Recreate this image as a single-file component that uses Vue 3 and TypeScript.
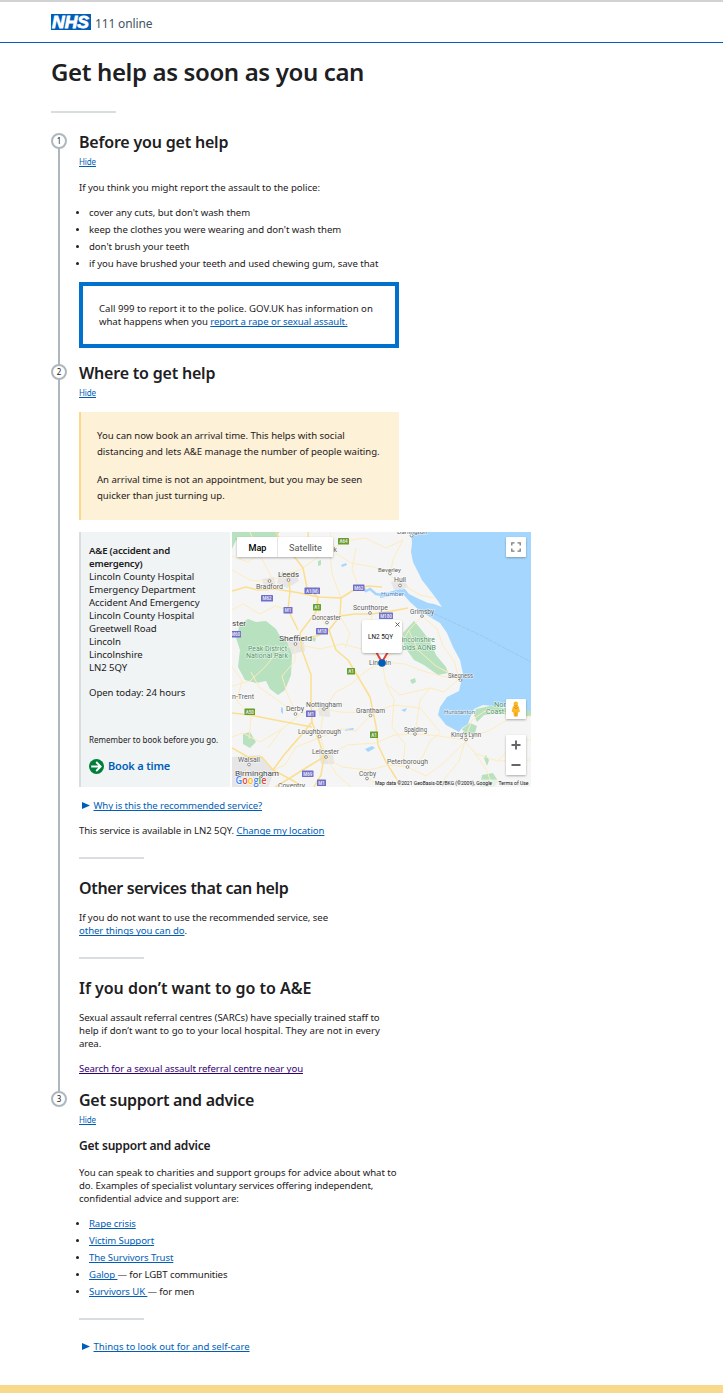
<script setup lang="ts">
interface Label { t: string; x: number; y: number; w: number; s?: number; c?: string }
interface Badge { x: number; y: number; w: number; t: string; green?: boolean }

const tips: string[] = [
  "cover any cuts, but don't wash them",
  "keep the clothes you were wearing and don't wash them",
  "don't brush your teeth",
  'if you have brushed your teeth and used chewing gum, save that',
]
const address: string[] = [
  'Lincoln County Hospital', 'Emergency Department', 'Accident And Emergency',
  'Lincoln County Hospital', 'Greetwell Road', 'Lincoln', 'Lincolnshire', 'LN2 5QY',
]
const charities: { name: string; note?: string }[] = [
  { name: 'Rape crisis' },
  { name: 'Victim Support' },
  { name: 'The Survivors Trust' },
  { name: 'Galop ', note: '— for LGBT communities' },
  { name: 'Survivors UK ', note: '— for men' },
]

// x is the left edge, y the baseline, w the drawn width
const labels: Label[] = [
  { t: 'Leeds', x: 278, y: 576.5, w: 21, s: 7.5, c: '#444' },
  { t: 'Bradford', x: 256, y: 588.5, w: 27 },
  { t: 'Scunthorpe', x: 353, y: 610, w: 35 },
  { t: 'Doncaster', x: 312, y: 620, w: 29 },
  { t: 'Sheffield', x: 279, y: 640.5, w: 33, s: 7.5, c: '#444' },
  { t: 'Beverley', x: 378, y: 571.5, w: 23, s: 6 },
  { t: 'Hull', x: 394, y: 582, w: 12 },
  { t: 'Grimsby', x: 410, y: 613.5, w: 24 },
  { t: 'Darlington', x: 397, y: 534, w: 30, s: 6 },
  { t: 'k', x: 333.5, y: 552, w: 3.5 },
  { t: 'ster', x: 232, y: 625.5, w: 14, s: 7.5, c: '#444' },
  { t: 'Humber', x: 381, y: 596, w: 23, s: 5.5, c: '#4a7fc0' },
  { t: 'Peak District', x: 248, y: 651, w: 39, s: 6.5, c: '#4d9366' },
  { t: 'National Park', x: 246, y: 657.5, w: 42, s: 6.5, c: '#4d9366' },
  { t: 'Lincolnshire', x: 398, y: 642, w: 37, s: 6.5, c: '#4d9366' },
  { t: 'Wolds AONB', x: 396, y: 649.5, w: 40, s: 6.5, c: '#4d9366' },
  { t: 'Lincoln', x: 369, y: 665, w: 22, s: 6.5 },
  { t: 'Skegness', x: 448, y: 678, w: 25, s: 6.5 },
  { t: 'n-Trent', x: 232, y: 699, w: 22, s: 6.5 },
  { t: 'Derby', x: 286, y: 711, w: 18 },
  { t: 'Nottingham', x: 306, y: 706.5, w: 36 },
  { t: 'Grantham', x: 356, y: 713, w: 29, s: 6.5 },
  { t: 'Hunstanton', x: 444, y: 713.5, w: 31, s: 6, c: '#64788c' },
  { t: 'Nor', x: 494, y: 706.5, w: 12, s: 6.5, c: '#4d9366' },
  { t: 'Coast', x: 486, y: 713.5, w: 18, s: 6.5, c: '#4d9366' },
  { t: 'Loughborough', x: 298, y: 734, w: 43 },
  { t: 'Leicester', x: 312, y: 754, w: 27 },
  { t: 'Spalding', x: 404, y: 732, w: 23, s: 6.5 },
  { t: 'King’s Lynn', x: 451, y: 737, w: 30, s: 6.5 },
  { t: 'Walsall', x: 238, y: 761.5, w: 22 },
  { t: 'Birmingham', x: 235, y: 775.5, w: 44, s: 7.5, c: '#444' },
  { t: 'Peterborough', x: 387, y: 764, w: 41 },
  { t: 'Corby', x: 359, y: 776, w: 17 },
  { t: 'Coventry', x: 278, y: 788, w: 27 },
]
const badges: Badge[] = [
  { x: 338, y: 538, w: 11, t: 'A64', green: true },
  { x: 304.5, y: 587.5, w: 15.5, t: 'A1(M)' },
  { x: 353, y: 584.5, w: 11.5, t: 'M62' },
  { x: 261, y: 595, w: 12, t: 'M62' },
  { x: 283.5, y: 607, w: 9, t: 'M1' },
  { x: 313, y: 604, w: 8, t: 'A1', green: true },
  { x: 316, y: 628, w: 12, t: 'M18' },
  { x: 230, y: 631, w: 11, t: 'M60' },
  { x: 379, y: 612.5, w: 14, t: 'M180' },
  { x: 347, y: 668, w: 8, t: 'A1', green: true },
  { x: 244.5, y: 708.5, w: 10.5, t: 'A50', green: true },
  { x: 306, y: 710.5, w: 9.5, t: 'M1' },
  { x: 370, y: 731.5, w: 8, t: 'A1', green: true },
  { x: 302, y: 770.5, w: 11.5, t: 'M69' },
  { x: 317, y: 779.5, w: 9, t: 'M1' },
]
const towns: [number, number][] = [
  [288.5, 580], [269.5, 581], [327, 622.5], [295.5, 644], [370, 613], [390, 573.5], [400, 585.5],
  [422, 616], [295.5, 714], [324, 709], [370.5, 715.5], [319.5, 736.5], [326, 757], [415, 734],
  [466, 739.5], [249, 764.5], [407.5, 767], [367, 778.5], [460.5, 680], [411.5, 535.5],
]
const motorways: string[] = [
  'M232 591 L246 587 L258 590 L275 589 L288 591 L300 593 L318 597 L341 598 L352 591 L368 586 L382 587',
  'M276 532 L283 546 L297 560 L303 568 L307 588 L318 597 L316 612 L300 633 L302 650 L311 675 L311 700 L312 722 L320 744 L324 757 L321 775 L314 787',
  'M290 550 L305 556 L309 545 L308 532',
  'M288 573 L290 591 L288 610 L298 630',
  'M341 598 L340 616 L329 630 L317 636 L303 638',
  'M340 616 L355 614 L372 614 L392 611 L408 608',
  'M329 630 L336 650 L348 660 L360 680 L370 697 L376 726 L378 745 L386 762 L396 778 L401 787',
  'M232 713 L250 715 L270 719 L296 724 L312 727',
  'M324 757 L309 766 L290 778 L275 787',
  'M232 748 L248 757 L262 757 L273 770 L290 779 L304 787',
  'M273 770 L284 755 L303 733 L312 722',
]
const roads: string[] = [
  'M232 556 L248 562 L268 548 L290 552', 'M232 610 L243 604 L260 614 L275 606 L288 610',
  'M250 532 L257 550 L269 572 L276 589 L288 573 L300 570', 'M300 570 L318 557 L345 541 L365 538 L386 548 L403 540',
  'M334 550 L330 532', 'M334 552 L351 563 L374 567 L388 573 L400 584', 'M403 540 L394 557 L390 573',
  'M403 585 L420 595 L434 598', 'M330 554 L332 574 L341 598', 'M358 586 L352 569 L356 548',
  'M232 570 L250 580 L269 582 L288 573', 'M318 597 L319 616 L326 625', 'M295 644 L277 652 L265 667 L250 681 L232 686',
  'M295 644 L320 649 L342 644 L370 651 L382 662', 'M382 662 L378 644 L370 628 L372 614', 'M382 662 L399 648 L409 630 L422 616',
  'M382 662 L405 664 L423 671 L441 676 L460 679', 'M382 662 L386 683 L394 700 L392 727 L405 744 L403 766',
  'M382 662 L366 671 L351 684 L336 692 L324 709', 'M423 617 L437 629 L443 646 L454 661 L459 679 L444 692 L430 688 L420 700 L415 734',
  'M324 709 L340 712 L371 713 L394 705 L420 708 L440 732', 'M324 709 L320 735 L326 757', 'M324 709 L302 713 L282 729 L268 748',
  'M296 713 L287 693 L282 676 L295 661 L295 645', 'M296 713 L277 700 L259 687 L251 672', 'M232 667 L242 680 L237 701 L251 716 L249 739',
  'M326 757 L347 745 L376 743 L394 735 L416 734 L440 736 L465 740', 'M326 757 L342 767 L369 770 L389 765 L407 767',
  'M407 767 L422 758 L430 741 L440 733', 'M407 767 L426 776 L445 762 L465 742', 'M465 742 L476 754 L498 761 L530 760',
  'M465 739 L472 720 L485 711 L509 713', 'M465 739 L488 731 L509 719 L531 716', 'M465 742 L459 761 L438 787', 'M472 749 L486 769 L493 787',
  'M326 757 L337 775 L351 787', 'M367 778 L381 787', 'M319 738 L296 747 L285 765 L273 770', 'M319 738 L340 729 L356 731 L371 715',
  'M249 764 L243 782 L255 787', 'M498 761 L511 747 L523 740 L531 740', 'M409 631 L418 650 L436 666 L460 679',
  'M386 683 L400 695 L430 688', 'M345 648 L350 634 L340 616', 'M232 737 L243 733 L260 742 L282 729',
]
const lakes: string[] = [
  'M341 565 l5 -2 l1 2 l-5 2z', 'M365 749 l7 -3 l3 2 l-7 4z', 'M345 729 l9 -1 l-1 2 l-8 1z', 'M281 707 l2 1 l0 6 l-2 -2z',
  'M401 710 l6 -2 l-2 4z', 'M282 571 l2 3 l-2 1z', 'M328 751 l4 -1 l-2 3z',
]
</script>

<template>
  <div class="page">
    <header class="header">
      <svg class="nhs" width="40" height="16" viewBox="0 0 40 16" aria-label="NHS">
        <rect width="40" height="16" fill="#005eb8" />
        <text x="1" y="14" textLength="37" lengthAdjust="spacingAndGlyphs" class="nhs-text">NHS</text>
      </svg>
      <span class="service">111 online</span>
    </header>

    <main class="main">
      <h1>Get help as soon as you can</h1>
      <hr class="rule">

      <ol class="steps">
        <li class="step">
          <span class="num">1</span>
          <h2>Before you get help</h2>
          <a class="hide">Hide</a>
          <p class="intro">If you think you might report the assault to the police:</p>
          <ul class="list">
            <li v-for="tip in tips" :key="tip">{{ tip }}</li>
          </ul>
          <div class="inset">
            Call 999 to report it to the police. GOV.UK has information on<br>
            <span class="what">what happens when you <a>report a rape or sexual assault.</a></span>
          </div>
        </li>

        <li class="step">
          <span class="num">2</span>
          <h2 class="where">Where to get help</h2>
          <a class="hide">Hide</a>
          <div class="notice">
            <p>You can now book an arrival time. This helps with social<br>distancing and lets A&amp;E manage the number of people waiting.</p>
            <p>An arrival time is not an appointment, but you may be seen<br>quicker than just turning up.</p>
          </div>

          <div class="service-row">
            <section class="card">
              <h4>A&amp;E (accident and<br>emergency)</h4>
              <p v-for="(line, i) in address" :key="i">{{ line }}</p>
              <p class="open">Open today: 24 hours</p>
              <p class="remember">Remember to book before you go.</p>
              <a class="book">
                <svg width="15" height="15" viewBox="0 0 15 15">
                  <circle cx="7.5" cy="7.5" r="7.5" fill="#007f3b" />
                  <path d="M2.2 7.5H11.5M7.2 3L11.7 7.5L7.2 12" fill="none" stroke="#fff" stroke-width="1.8" />
                </svg>
                <span class="book-text">Book a time</span>
              </a>
            </section>

            <svg class="map" width="299" height="255" viewBox="232 532 299 255">
              <defs>
                <filter id="lift" x="-20%" y="-20%" width="140%" height="150%">
                  <feDropShadow dx="0" dy="1" stdDeviation="1" flood-color="#000" flood-opacity=".3" />
                </filter>
              </defs>
              <rect x="232" y="532" width="299" height="255" fill="#f5f5f5" />

              <!-- parks -->
              <g fill="#b7e1bf">
                <path d="M232 532H279L276 540L268 545L262 541L254 539L246 543L236 540L232 549Z" />
                <path d="M240 624L248 619L256 622L266 621L276 629L281 638L290 640L292 655L291 675L285 690L278 695L270 689L266 681L256 683L245 680L238 667L240 650L236 638Z" />
                <path d="M403 633L414 621L420 628L430 641L436 655L446 667L448 673L438 675L424 665L414 660L404 646Z" />
                <path d="M243 734L250 732L256 742L250 748L243 744Z" />
                <path d="M476 709L490 706L512 709L531 707V716L516 717L500 713L484 715L477 722L474 715Z" />
                <path d="M462 729L470 723L477 726L475 733L466 735Z" />
                <path d="M482 775L493 773L498 781L494 787H480Z" />
                <path d="M486 755L489 760L487 766L484 758Z" />
                <path d="M318 561l3 -1l0 5l-3 1zM313 637l3 1l-1 4l-3 -2zM249 765l5 2l-1 4l-4 -1zM410 680l5 -2l1 4l-4 2z" />
              </g>
              <g fill="#e6e6e8">
                <path d="M280 573L295 572L299 581L287 588L277 583Z" />
                <path d="M262 579L274 577L276 589L265 591Z" />
                <path d="M286 640L303 637L305 651L292 654Z" />
                <path d="M318 703L329 703L330 717L319 716Z" />
                <path d="M232 757L260 755L274 772L268 787H232Z" />
                <path d="M319 754L333 752L334 764L321 764Z" />
                <path d="M391 582L404 579L408 587L395 592Z" />
              </g>

              <!-- sea, Humber estuary and the Wash -->
              <path fill="#a5d7fe" d="M411 532L412 543L411 552L413 562L422 580L432 593L438 601L442 607L434 604L428 603L417 598L409 594L405 589L396 590L389 592L380 593V598L391 596L403 594L410 602L420 611L430 617L440 623L447 633L453 647L460 660L463 674L459 691L447 697L440 707L438 715L446 725L459 732L462 728L468 724L470 718L474 709L483 705L494 706L512 708L531 711V532Z" />
              <path d="M361 587L366 591L370 589L376 594L382 595" fill="none" stroke="#a5d7fe" stroke-width="2.5" />
              <path d="M430 612L448 620L480 635L531 662" fill="none" stroke="#8fbde4" stroke-width=".6" stroke-dasharray="4 1" />
              <path v-for="d in lakes" :key="d" :d="d" fill="#a5d7fe" />

              <g class="lines">
                <path v-for="d in roads" :key="d" :d="d" stroke="#fdecbd" stroke-width="1" />
                <path v-for="d in motorways" :key="d" :d="d" stroke="#fbdf8e" stroke-width="1.5" />
              </g>

              <circle v-for="[x, y] in towns" :key="x + '-' + y" :cx="x" :cy="y" r="1.4" fill="#fff" stroke="#777" stroke-width=".8" />

              <g v-for="b in badges" :key="b.x + '-' + b.y">
                <rect :x="b.x" :y="b.y" :width="b.w" height="6.5" rx=".6" :fill="b.green ? '#669f24' : '#6f6fc8'" />
                <text class="badge" :x="b.x + b.w / 2" :y="b.y + 5.1">{{ b.t }}</text>
              </g>

              <text
                v-for="l in labels" :key="l.t" class="label" :x="l.x" :y="l.y"
                :font-size="l.s ?? 7" :fill="l.c ?? '#5e5e5e'" :textLength="l.w" lengthAdjust="spacingAndGlyphs"
              >{{ l.t }}</text>

              <!-- marker and its bubble -->
              <path d="M375.5 651L382 662L388.5 651" fill="#fff" stroke="#e0443c" stroke-width="2" />
              <circle cx="382" cy="663" r="3.8" fill="#005eb8" />
              <rect x="362" y="620" width="40" height="33" rx="3" fill="#fff" filter="url(#lift)" />
              <text x="368" y="639" class="tiny" font-size="6.5" textLength="25" lengthAdjust="spacingAndGlyphs">LN2 5QY</text>
              <path d="M395.5 622.5L399.5 626.5M399.5 622.5L395.5 626.5" stroke="#555" stroke-width=".9" />

              <!-- map type switch -->
              <g filter="url(#lift)">
                <rect x="237" y="537" width="96" height="20" rx="1" fill="#fff" />
              </g>
              <path d="M277.5 537V557" stroke="#e6e6e6" />
              <text x="248.5" y="551" class="switch on" textLength="18" lengthAdjust="spacingAndGlyphs">Map</text>
              <text x="289" y="551" class="switch" textLength="33" lengthAdjust="spacingAndGlyphs">Satellite</text>

              <!-- controls -->
              <g fill="#fff" filter="url(#lift)">
                <rect x="506" y="537" width="20" height="20" rx="1" />
                <rect x="506" y="699" width="20" height="20" rx="1" />
                <rect x="506" y="735" width="20" height="40" rx="1" />
              </g>
              <path d="M511.8 545.5V542.8H514.5M517.5 542.8H520.2V545.5M520.2 548.5V551.2H517.5M514.5 551.2H511.8V548.5" fill="none" stroke="#7a7a7a" stroke-width="1.3" />
              <g>
                <path d="M512.8 706.6Q515.8 704.9 518.8 706.6L519.9 711.8L518.3 712.2L517.7 716.5H513.9L513.3 712.2L511.7 711.8Z" fill="#fbb829" />
                <path d="M513.9 707L515.8 709L517.7 707" fill="none" stroke="#dd8c12" stroke-width=".9" />
                <path d="M515.8 712.5V716.5" stroke="#dd8c12" stroke-width=".7" />
                <circle cx="515.8" cy="703.9" r="2.3" fill="#fbb829" />
                <path d="M513.9 705.3Q515.8 707.2 517.7 705.3" fill="none" stroke="#dd8c12" stroke-width=".8" />
              </g>
              <path d="M511.5 745H520.5M516 740.5V749.5M511.5 765H520.5" stroke="#666" stroke-width="1.9" />

              <!-- attribution -->
              <rect x="374" y="779.5" width="157" height="7.5" fill="#f5f5f5" fill-opacity=".75" />
              <g class="tiny" font-size="5.5">
                <text x="375" y="785.3" textLength="117" lengthAdjust="spacingAndGlyphs">Map data ©2021 GeoBasis-DE/BKG (©2009), Google</text>
                <text x="498.5" y="785.3" textLength="30" lengthAdjust="spacingAndGlyphs">Terms of Use</text>
              </g>
              <text x="235.5" y="783.5" class="google" textLength="31" lengthAdjust="spacingAndGlyphs"><tspan fill="#4285f4">G</tspan><tspan fill="#ea4335">o</tspan><tspan fill="#fbbc05">o</tspan><tspan fill="#4285f4">g</tspan><tspan fill="#34a853">l</tspan><tspan fill="#ea4335">e</tspan></text>
            </svg>
          </div>

          <p class="more why"><svg class="tri" width="8" height="7" viewBox="0 0 8 7"><path d="M0 0L8 3.5L0 7Z" fill="#005eb8" /></svg><a>Why is this the recommended service?</a></p>
          <p class="para avail">This service is available in LN2 5QY. <a>Change my location</a></p>
          <hr class="rule after">
          <h2 class="sub other">Other services that can help</h2>
          <p class="para wide">If you do not want to use the recommended service, see<br><a>other things you can do</a>.</p>
          <hr class="rule after">
          <h2 class="sub sarc">If you don’t want to go to A&amp;E</h2>
          <p class="para wide">Sexual assault referral centres (SARCs) have specially trained staff to<br><span class="loose">help if don’t want to go to your local hospital. They are not in every</span><br>area.</p>
          <p class="para search"><a class="visited">Search for a sexual assault referral centre near you</a></p>
        </li>

        <li class="step last">
          <span class="num">3</span>
          <h2 class="support">Get support and advice</h2>
          <a class="hide">Hide</a>
          <h3>Get support and advice</h3>
          <p class="para speak">You can speak to charities and support groups for advice about what to<br><span class="examples">do. Examples of specialist voluntary services offering independent,</span><br>confidential advice and support are:</p>
          <ul class="list links">
            <li v-for="c in charities" :key="c.name"><a>{{ c.name }}</a>{{ c.note }}</li>
          </ul>
          <hr class="rule end">
          <p class="more care"><svg class="tri" width="8" height="7" viewBox="0 0 8 7"><path d="M0 0L8 3.5L0 7Z" fill="#005eb8" /></svg><a>Things to look out for and self-care</a></p>
        </li>
      </ol>
    </main>
    <footer class="footer"></footer>
  </div>
</template>

<style scoped>
.page {
  height: 1393px;
  box-sizing: border-box;
  overflow: hidden;
  border-top: 2px solid #d2d2d2;
  background: #fff;
  color: #1d2022;
  font: 9.6px/13px "Noto Sans", "Open Sans", sans-serif;
  letter-spacing: -0.03px;
}
h1, h2, h3, h4, p, ul, ol { margin: 0; padding: 0; font-weight: 400; }
ul, ol { list-style: none; }
a { color: #005eb8; text-decoration: underline; text-underline-offset: 1px; text-decoration-thickness: 1px; text-decoration-skip-ink: none; }
a.visited { color: #330072; }

.header {
  display: flex;
  align-items: flex-start;
  height: 40px;
  padding: 12px 0 0 51px;
  box-sizing: border-box;
  box-shadow: 0 1px 0 #005eb8;
}
.nhs { display: block; }
.nhs-text { font: italic 700 16.5px "Liberation Sans", Arial, sans-serif; fill: #fff; stroke: #fff; stroke-width: .8px; letter-spacing: 0; }
.service { margin: 1px 0 0 4px; font-size: 12px; line-height: 18px; letter-spacing: -0.15px; color: #425563; }

.main { padding: 14px 0 0 51px; }
h1 { font-size: 24px; line-height: 32px; font-weight: 600; letter-spacing: -0.37px; white-space: nowrap; }
.rule { width: 65px; height: 2px; margin: 23px 0 20px; border: 0; background: #d8dde0; }

.step {
  position: relative;
  display: flex;
  flex-direction: column;
  align-items: flex-start;
  padding: 0 0 16px 28px;
}
.step::before {
  content: "";
  position: absolute;
  left: 7px;
  top: 15px;
  bottom: -1px;
  width: 2px;
  background: #aeb7bd;
}
.step.last { padding-bottom: 0; }
.step.last::before { display: none; }
.num {
  position: absolute;
  left: 0;
  top: 0;
  width: 16px;
  height: 16px;
  box-sizing: border-box;
  border: 2px solid #aeb7bd;
  border-radius: 50%;
  background: #fff;
  font-size: 8px;
  line-height: 12px;
  text-align: center;
  letter-spacing: 0;
}
h2 { margin-top: -1px; font-size: 16px; line-height: 20px; font-weight: 600; letter-spacing: -0.2px; }
.support { letter-spacing: -0.27px; }
.hide { margin-top: 4px; font-size: 8px; line-height: 12px; letter-spacing: -0.1px; }
.intro { margin-top: 13px; }
.list { margin-top: 10px; padding-left: 10px; line-height: 17px; letter-spacing: -0.04px; }
.links { letter-spacing: -0.1px; }
.list li { position: relative; white-space: pre; }
.list li::before {
  content: "";
  position: absolute;
  left: -13px;
  top: 7px;
  width: 3px;
  height: 3px;
  border-radius: 50%;
  background: #1d2226;
}
.what { letter-spacing: -0.07px; }
.search { letter-spacing: -0.09px; }
.examples { letter-spacing: -0.09px; }
.loose { letter-spacing: 0.02px; }
.inset {
  width: 320px;
  margin-top: 10px;
  padding: 16px;
  box-sizing: border-box;
  border: 4px solid #0072ce;
  letter-spacing: 0.01px;
  white-space: nowrap;
}
.notice {
  width: 320px;
  height: 108px;
  margin-top: 13px;
  padding: 16px 0 0 16px;
  box-sizing: border-box;
  border-left: 2px solid #fbd98a;
  background: #fdf1d7;
  line-height: 16px;
  white-space: nowrap;
}
.notice p + p { margin-top: 12px; }

.service-row { display: flex; gap: 2px; width: 452px; height: 255px; margin-top: 12px; }
.card {
  width: 151px;
  flex: none;
  padding: 12px 0 0 8px;
  box-sizing: border-box;
  border-left: 2px solid #d8dde0;
  background: #f0f4f5;
  white-space: nowrap;
  letter-spacing: -0.06px;
}
.card h4 { font-size: 9.6px; font-weight: 600; letter-spacing: -0.2px; }
.open { margin-top: 12px; }
.remember { margin-top: 34px; font-size: 8px; letter-spacing: 0; }
.book { display: flex; align-items: center; gap: 4px; height: 15px; margin-top: 13px; font-size: 11px; font-weight: 600; letter-spacing: -0.18px; text-decoration: none; }
.book-text { margin-top: -2px; }
.map { display: block; flex: none; letter-spacing: 0; }
.lines path { fill: none; stroke-linejoin: round; }
.label { font-family: Roboto, sans-serif; paint-order: stroke; stroke: #fff; stroke-opacity: .7; stroke-width: 1.2px; }
.badge { font: 700 4.5px Roboto, sans-serif; fill: #e4e4f6; text-anchor: middle; }
.tiny { font-family: Roboto, sans-serif; fill: #111; }
.switch { font: 9.5px Roboto, sans-serif; fill: #565656; }
.switch.on { font-weight: 500; fill: #000; }
.google { font: 600 10.5px "Open Sans", sans-serif; paint-order: stroke; stroke: #fff; stroke-width: 1.2px; }

.more { margin-top: 12px; display: flex; align-items: center; padding-left: 3px; }
.why { letter-spacing: -0.1px; }
.tri { margin-right: 3.5px; }
.para { margin-top: 12px; white-space: nowrap; }
.avail { letter-spacing: -0.08px; }
.wide { letter-spacing: -0.07px; }
.rule.after { margin: 20px 0 19px; }
.sub { margin-top: 0; }
.sub + .para { margin-top: 13px; }
.other { letter-spacing: -0.35px; }
.sarc { letter-spacing: -0.02px; }
.speak { letter-spacing: -0.05px; }
h3 { margin-top: 12px; font-size: 12px; line-height: 16px; font-weight: 600; letter-spacing: -0.2px; }
.rule.end { margin: 18px 0 20px; }
.more.care { margin-top: 0; }
.footer { height: 8px; margin-top: 32px; background: #f9d98b; }
</style>
